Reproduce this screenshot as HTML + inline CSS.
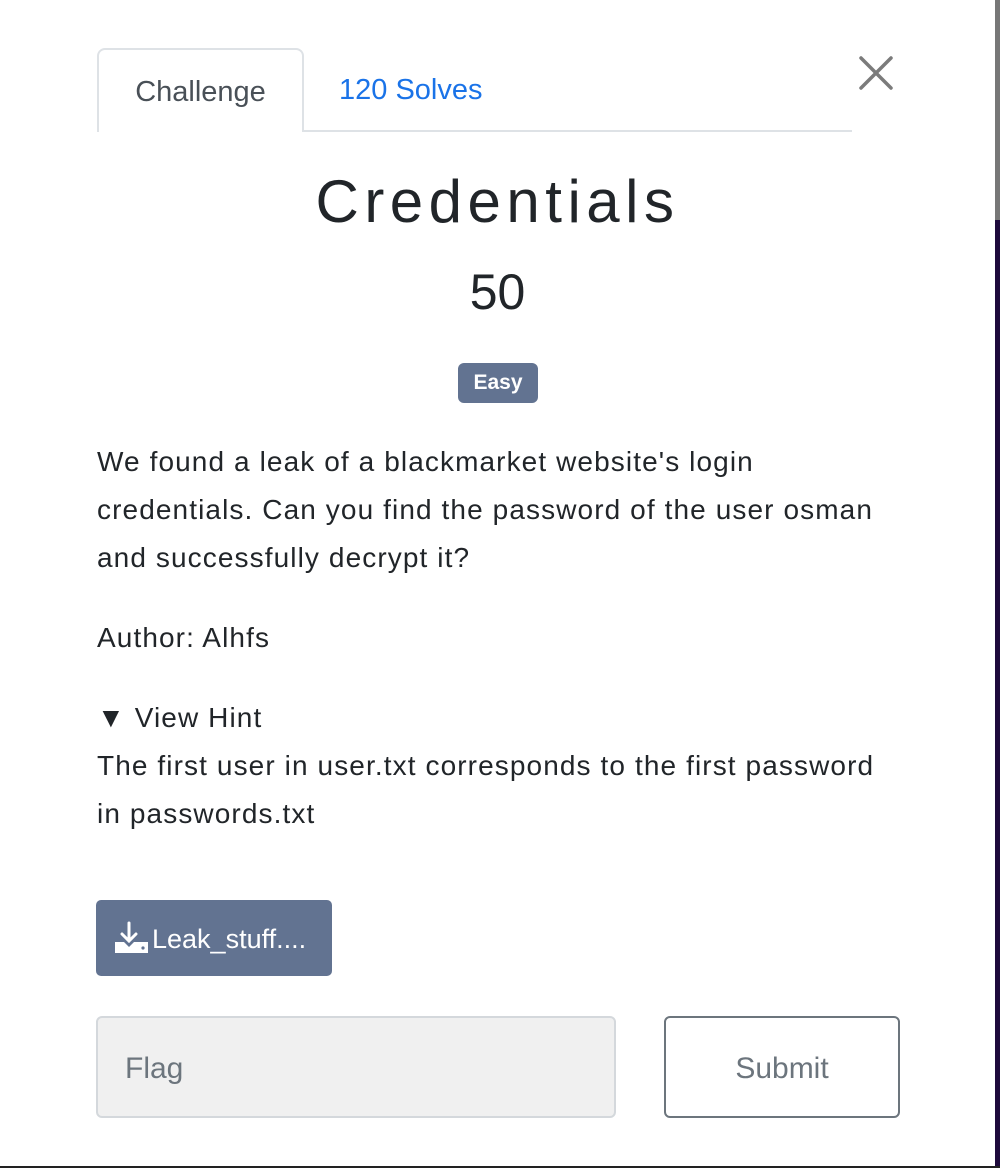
<!DOCTYPE html>
<html><head><meta charset="utf-8"><style>
*{margin:0;padding:0;box-sizing:border-box}
html,body{width:1000px;height:1168px;overflow:hidden;background:#fff;font-family:"Liberation Sans",sans-serif}
.strip{position:absolute;right:0;top:0;width:5px;height:1168px;background:#1e0a3c}
.strip2{position:absolute;right:0;top:0;width:5px;height:220px;background:#777}
.modal{position:absolute;left:0;top:0;width:995px;height:1166px;background:#fff;border-top-right-radius:8px;border-bottom-right-radius:6px}
.bottom{position:absolute;left:0;top:1166px;width:1000px;height:2px;background:#222}
.abs{position:absolute;white-space:nowrap}
.tab{left:97px;top:48px;width:207px;height:84px;border:2px solid #dee2e6;border-bottom:none;border-radius:8px 8px 0 0;background:#fff;color:#495057;font-size:29px;text-align:center;line-height:84px}
.line{left:303px;top:130px;width:549px;height:2px;background:#dee2e6}
.solves{left:339px;top:48px;line-height:84px;font-size:29px;color:#1a73e8}
.txt{color:#212529;font-size:28px;letter-spacing:1.1px;left:97px}
</style></head><body>
<div class="strip"></div><div class="strip2"></div>
<div class="modal"></div>
<div class="bottom"></div>
<svg class="abs" style="left:858px;top:55px" width="36" height="36" viewBox="0 0 36 36"><path d="M3 3L33 33M33 3L3 33" stroke="#7b7b7b" stroke-width="3.5" stroke-linecap="round"/></svg>
<div class="abs tab">Challenge</div>
<div class="abs line"></div>
<div class="abs solves">120 Solves</div>
<div class="abs" style="left:0;width:995px;text-align:center;top:164px;font-size:60px;letter-spacing:5.5px;color:#212529;line-height:76px">Credentials</div>
<div class="abs" style="left:0;width:995px;text-align:center;top:262px;font-size:50px;color:#212529;line-height:60px">50</div>
<div class="abs" style="left:458px;top:363px;width:80px;height:40px;background:#627391;border-radius:6px;color:#fff;font-weight:bold;font-size:21px;text-align:center;line-height:40px">Easy</div>
<div class="abs txt" style="top:438px;line-height:48px">We found a leak of a blackmarket website's login<br>credentials. Can you find the password of the user osman<br>and successfully decrypt it?</div>
<div class="abs txt" style="top:614px;line-height:48px">Author: Alhfs</div>
<div class="abs txt" style="top:694px;line-height:48px">▼ View Hint</div>
<div class="abs txt" style="top:742px;line-height:48px">The first user in user.txt corresponds to the first password<br>in passwords.txt</div>
<div class="abs" style="left:96px;top:900px;width:236px;height:76px;background:#627391;border-radius:5px;color:#fff;font-size:27px;line-height:78px;padding-left:56px">Leak_stuff....</div>
<svg class="abs" style="left:114px;top:921px" width="34" height="34" viewBox="0 0 34 34"><path d="M15 2v18M8 13l7 7 7-7" stroke="#fff" stroke-width="3" fill="none" stroke-linecap="round"/><path d="M1 21h9l5 5 5-5h14v11H1z" fill="#fff"/><circle cx="29" cy="27" r="1.6" fill="#627391"/></svg>
<div class="abs" style="left:96px;top:1016px;width:520px;height:102px;background:#f0f0f0;border:2px solid #d4d8dc;border-radius:6px;color:#6c757d;font-size:30px;line-height:102px;padding-left:27px">Flag</div>
<div class="abs" style="left:664px;top:1016px;width:236px;height:102px;background:#fff;border:2px solid #6c757d;border-radius:6px;color:#6c757d;font-size:30px;line-height:102px;text-align:center">Submit</div>
</body></html>
